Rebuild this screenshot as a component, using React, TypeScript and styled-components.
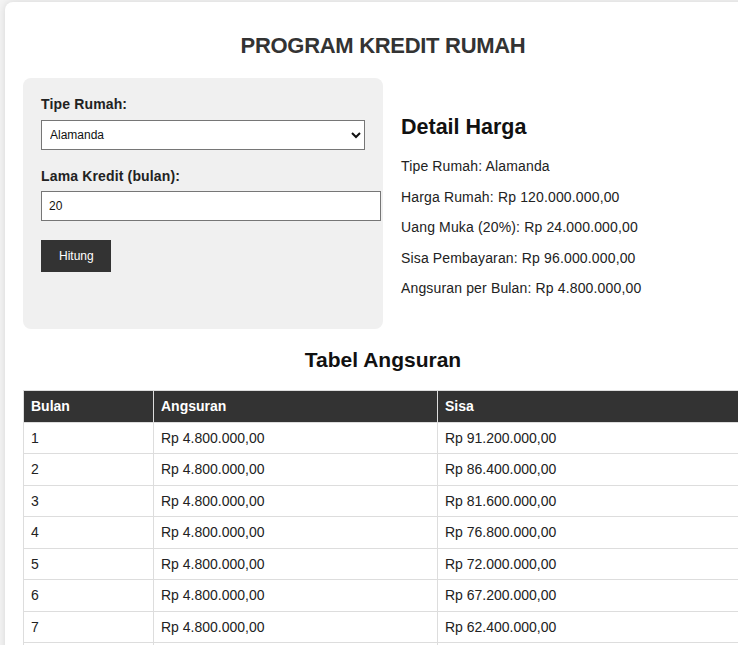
import React from "react";
import styled, { createGlobalStyle } from "styled-components";

const GlobalStyle = createGlobalStyle`
  html, body {
    margin: 0;
    padding: 0;
    background: #f4f4f4;
    overflow-x: hidden;
  }
  body {
    font-family: "Liberation Sans", Arial, sans-serif;
    color: #333;
  }
`;

const Container = styled.div`
  box-sizing: border-box;
  width: 756px;
  margin: 2px 0 0 5px;
  padding: 31px 18px 18px;
  background: #fff;
  border-radius: 8px;
  box-shadow: 0 0 8px rgba(0, 0, 0, 0.12);
`;

const Title = styled.h1`
  margin: 0 0 20px;
  text-align: center;
  font-size: 22px;
  line-height: 25px;
  letter-spacing: -0.3px;
  font-weight: 700;
  color: #333;
`;

const TopRow = styled.div`
  display: flex;
  align-items: stretch;
`;

const FormBox = styled.div`
  box-sizing: border-box;
  width: 360px;
  padding: 18px;
  background: #f0f0f0;
  border-radius: 8px;
  display: flex;
  flex-direction: column;
  align-items: flex-start;
`;

const Label = styled.label<{ $gap?: number }>`
  display: block;
  margin-top: ${(p) => p.$gap ?? 0}px;
  margin-bottom: ${(p) => (p.$gap ? 7 : 8)}px;
  font-size: 14px;
  line-height: 16px;
  letter-spacing: 0.15px;
  font-weight: 700;
  color: #222;
`;

const Select = styled.select`
  box-sizing: border-box;
  width: 100%;
  height: 30px;
  padding: 0 4px;
  font-family: "Liberation Sans", Arial, sans-serif;
  font-size: 12px;
  color: #111;
  background: #fff;
  border: 1px solid #767676;
  border-radius: 0;
`;

const Input = styled.input`
  box-sizing: content-box;
  width: 100%;
  height: 28px;
  padding: 0 7px;
  font-family: "Liberation Sans", Arial, sans-serif;
  font-size: 12px;
  color: #111;
  background: #fff;
  border: 1px solid #767676;
  border-radius: 0;
  outline: none;
`;

const Button = styled.button`
  margin-top: 19px;
  height: 32px;
  padding: 0 17px 0 18px;
  font-family: "Liberation Sans", Arial, sans-serif;
  font-size: 12px;
  color: #fff;
  background: #333;
  border: none;
  border-radius: 0;
  cursor: pointer;
`;

const Detail = styled.div`
  flex: 1;
  padding: 18px;
`;

const DetailTitle = styled.h2`
  margin: 19px 0 18px;
  font-size: 21.5px;
  line-height: 25px;
  font-weight: 700;
  color: #111;
`;

const DetailLine = styled.p`
  margin: 14px 0;
  font-size: 14px;
  line-height: 16.5px;
  letter-spacing: 0.15px;
  color: #222;
`;

const TableTitle = styled.h2`
  margin: 18px 0;
  text-align: center;
  font-size: 21px;
  line-height: 25px;
  font-weight: 700;
  color: #111;
`;

const Table = styled.table`
  width: 100%;
  border-collapse: collapse;
  table-layout: fixed;
  font-size: 14px;
`;

const Th = styled.th`
  padding: 7.5px 7px;
  line-height: 16px;
  text-align: left;
  font-weight: 700;
  color: #fff;
  background: #333;
  border: 1px solid #ddd;
`;

const Td = styled.td`
  padding: 7px 7px;
  line-height: 16.5px;
  color: #222;
  border: 1px solid #ddd;
`;

const fmt = (n: number) =>
  "Rp " +
  n
    .toFixed(2)
    .replace(".", ",")
    .replace(/\B(?=(\d{3})+(?!\d))/g, ".");

export default function App() {
  const harga = 120000000;
  const dp = harga * 0.2;
  const sisa = harga - dp;
  const bulan = 20;
  const angsuran = sisa / bulan;
  const rows = Array.from({ length: bulan }, (_, i) => ({
    no: i + 1,
    angsuran,
    sisa: sisa - angsuran * (i + 1),
  }));

  return (
    <>
      <GlobalStyle />
      <Container>
        <Title>PROGRAM KREDIT RUMAH</Title>
        <TopRow>
          <FormBox>
            <Label htmlFor="tipe">Tipe Rumah:</Label>
            <Select id="tipe" defaultValue="Alamanda">
              <option value="Alamanda">Alamanda</option>
              <option value="Bougenville">Bougenville</option>
              <option value="Cempaka">Cempaka</option>
            </Select>
            <Label htmlFor="lama" $gap={18}>
              Lama Kredit (bulan):
            </Label>
            <Input id="lama" type="text" defaultValue="20" />
            <Button type="button">Hitung</Button>
          </FormBox>
          <Detail>
            <DetailTitle>Detail Harga</DetailTitle>
            <DetailLine>Tipe Rumah: Alamanda</DetailLine>
            <DetailLine>Harga Rumah: {fmt(harga)}</DetailLine>
            <DetailLine>Uang Muka (20%): {fmt(dp)}</DetailLine>
            <DetailLine>Sisa Pembayaran: {fmt(sisa)}</DetailLine>
            <DetailLine>Angsuran per Bulan: {fmt(angsuran)}</DetailLine>
          </Detail>
        </TopRow>
        <TableTitle>Tabel Angsuran</TableTitle>
        <Table>
          <colgroup>
            <col style={{ width: 130 }} />
            <col style={{ width: 284 }} />
            <col />
          </colgroup>
          <thead>
            <tr>
              <Th>Bulan</Th>
              <Th>Angsuran</Th>
              <Th>Sisa</Th>
            </tr>
          </thead>
          <tbody>
            {rows.map((r) => (
              <tr key={r.no}>
                <Td>{r.no}</Td>
                <Td>{fmt(r.angsuran)}</Td>
                <Td>{fmt(r.sisa)}</Td>
              </tr>
            ))}
          </tbody>
        </Table>
      </Container>
    </>
  );
}
